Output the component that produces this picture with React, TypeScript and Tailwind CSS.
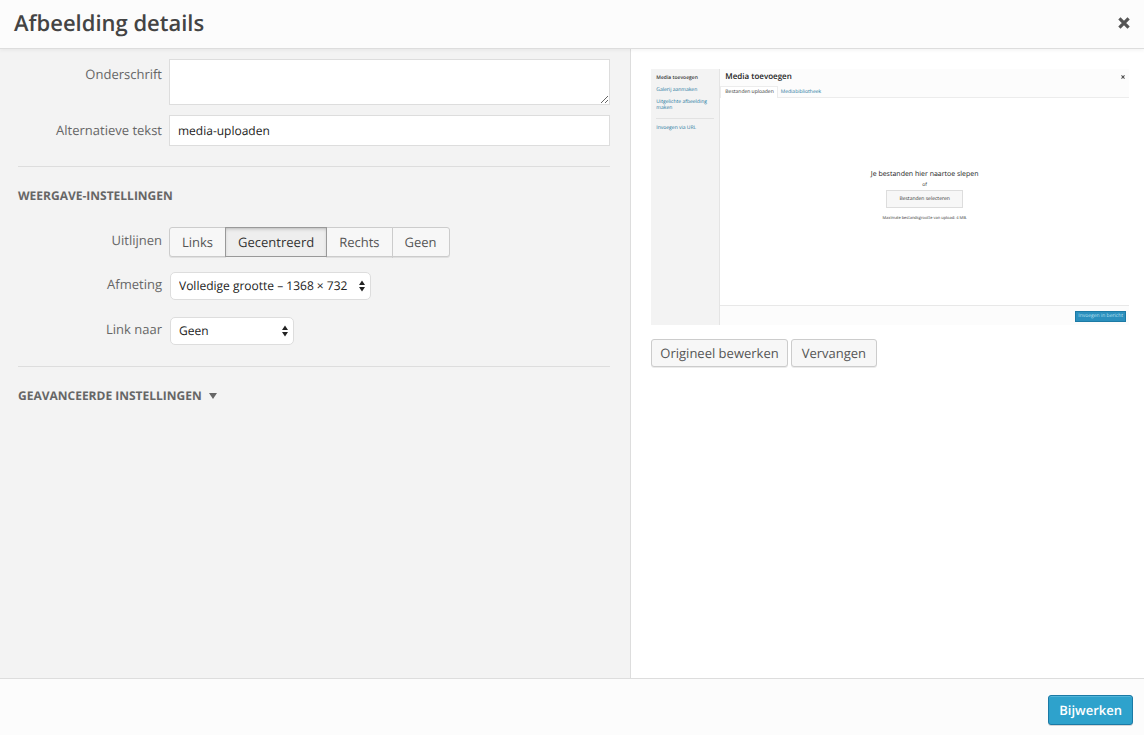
import { useState } from 'react';
import type { ReactNode } from 'react';

const ALIGNMENTS = ['Links', 'Gecentreerd', 'Rechts', 'Geen'];

const grayButton =
  'border border-[#ccc] bg-[#f7f7f7] pt-px text-[#555] text-[13px] shadow-[0_1px_0_rgba(0,0,0,0.08)] hover:bg-[#fafafa] cursor-pointer';

function CloseIcon({ className }: { className?: string }) {
  return (
    <svg viewBox="0 0 12 12" className={className} fill="none" stroke="currentColor" strokeWidth="3.2" aria-hidden="true">
      <path d="M1.4 1.4 10.6 10.6M10.6 1.4 1.4 10.6" />
    </svg>
  );
}

function Setting({ id, label, tall, children }: { id: string; label: string; tall?: boolean; children: ReactNode }) {
  return (
    <div className="flex items-start gap-[7px]">
      <label
        htmlFor={id}
        className={`w-36 shrink-0 text-right text-[13px] leading-5 text-[#666] ${tall ? 'pt-[5px]' : 'pt-[2px]'}`}
      >
        {label}
      </label>
      {children}
    </div>
  );
}

function Select({ id, options, className }: { id: string; options: string[]; className: string }) {
  return (
    <div className={`relative ml-px ${className}`}>
      <select
        id={id}
        className="block h-7 w-full appearance-none rounded-[5px] border border-[#ddd] bg-white pl-2 pr-4 text-xs text-[#222]"
      >
        {options.map((option) => (
          <option key={option}>{option}</option>
        ))}
      </select>
      <svg viewBox="0 0 6 12" className="pointer-events-none absolute right-[6px] top-2 h-3 w-[6px]" fill="#222" aria-hidden="true">
        <path d="M3 0.5 6 5H0zM3 11.5 0 7h6z" />
      </svg>
    </div>
  );
}

// Miniature of the media dialog, shown as the image being edited
function Preview() {
  return (
    <div className="flex aspect-[478/256] text-[5px] leading-[6px] text-[#333]">
      <div className="flex w-[69px] shrink-0 flex-col gap-[6px] border-r border-[#e4e4e4] bg-[#f3f3f3] px-[5px] pt-[6px] text-[#21759b]">
        <span className="font-semibold text-[#333]">Media toevoegen</span>
        <span>Galerij aanmaken</span>
        <span>Uitgelichte afbeelding maken</span>
        <hr className="mt-px border-[#e2e2e2]" />
        <span>Invoegen via URL</span>
      </div>
      <div className="flex min-w-0 flex-1 flex-col">
        <div className="border-b border-[#ececec] bg-[#fcfcfc]">
          <div className="flex items-center justify-between pl-[5px] pr-1 pt-[3px]">
            <span className="text-[8px] font-semibold leading-[10px] text-[#222]">Media toevoegen</span>
            <CloseIcon className="size-1 text-[#555]" />
          </div>
          <div className="mt-1 flex leading-[10px]">
            <span className="-mb-px border-x border-t border-[#ececec] bg-white pl-1 pr-[3px]">Bestanden uploaden</span>
            <span className="border-t border-transparent px-[3px] text-[#21759b]">Mediabibliotheek</span>
          </div>
        </div>
        <div className="flex flex-1 flex-col items-center justify-center bg-white pb-[10px]">
          <span className="text-[7px] leading-[10px] text-[#222]">Je bestanden hier naartoe slepen</span>
          <span className="mt-[2px]">of</span>
          <span className="mt-[2px] border border-[#ddd] bg-[#f7f7f7] px-3 py-[5px]">Bestanden selecteren</span>
          <span className="mt-2 text-[4px]">Maximale bestandsgrootte van upload: 4 MB.</span>
        </div>
        <div className="flex justify-end border-t border-[#e8e8e8] bg-[#fcfcfc] px-[3px] pb-[3px] pt-[5px]">
          <span className="border border-[#1c7aa5] bg-[#2b8fbd] px-[2px] py-px leading-[7px] text-[#b9e0f2]">Invoegen in bericht</span>
        </div>
      </div>
    </div>
  );
}

export default function App() {
  const [align, setAlign] = useState('Gecentreerd');
  const [altText, setAltText] = useState('media-uploaden');

  return (
    <div className="flex min-h-screen flex-col bg-white font-['Open_Sans',sans-serif] text-[13px] text-[#444] **:[text-rendering:geometricPrecision]">
      <header className="relative flex h-[49px] items-center justify-between border-b border-[#ddd] bg-[#fcfcfc] pl-[14px] pr-[14px] pb-[2px] shadow-[0_2px_3px_rgba(0,0,0,0.04)]">
        <h1 className="text-[22px] font-semibold leading-8 text-[#444]">Afbeelding details</h1>
        <button type="button" aria-label="Sluiten" className="cursor-pointer text-[#555]">
          <CloseIcon className="size-3" />
        </button>
      </header>

      <main className="flex flex-1">
        <section className="w-[55.1%] bg-[#f3f3f3] pl-[18px] pr-5 pt-[10px]">
          <div className="flex flex-col gap-[10px]">
            <Setting id="caption" label="Onderschrift" tall>
              <textarea
                id="caption"
                className="block h-[46px] min-w-0 flex-1 resize-y border border-[#ddd] bg-white px-2 py-1 text-[#222]"
              />
            </Setting>
            <Setting id="alt" label="Alternatieve tekst" tall>
              <input
                id="alt"
                type="text"
                value={altText}
                onChange={(e) => setAltText(e.target.value)}
                className="h-[31px] min-w-0 flex-1 border border-[#ddd] bg-white px-2 text-xs text-[#222]"
              />
            </Setting>
          </div>

          <hr className="mt-5 border-[#ddd]" />
          <h2 className="mt-[19px] text-xs font-bold leading-5 text-[#666]">WEERGAVE-INSTELLINGEN</h2>

          <div className="mt-[21px] flex flex-col">
            <div className="flex items-start gap-[7px]">
              <span id="align-label" className="w-36 shrink-0 pt-[3px] text-right leading-5 text-[#666]">
                Uitlijnen
              </span>
              <div role="group" aria-labelledby="align-label" className="flex">
                {ALIGNMENTS.map((name) => (
                  <button
                    key={name}
                    type="button"
                    aria-pressed={align === name}
                    onClick={() => setAlign(name)}
                    className={`-mr-px h-[30px] px-3 first:rounded-l-[3px] last:rounded-r-[3px] ${
                      align === name
                        ? 'relative cursor-pointer border border-[#999] bg-[#eee] pt-px text-[13px] text-[#333] shadow-[inset_0_2px_5px_-3px_rgba(0,0,0,0.5)]'
                        : grayButton
                    }`}
                  >
                    {name}
                  </button>
                ))}
              </div>
            </div>
            <div className="mt-[15px] flex flex-col gap-[17px]">
              <Setting id="size" label="Afmeting">
                <Select id="size" className="w-[201px]" options={['Volledige grootte – 1368 × 732']} />
              </Setting>
              <Setting id="link" label="Link naar">
                <Select id="link" className="w-[124px]" options={['Geen']} />
              </Setting>
            </div>
          </div>

          <hr className="mt-[21px] border-[#ddd]" />
          <h2 className="mt-[19px]">
            <button
              type="button"
              className="flex cursor-pointer items-center gap-[7px] text-xs font-bold leading-5 text-[#666]"
            >
              GEAVANCEERDE INSTELLINGEN
              <svg viewBox="0 0 8 6" className="h-[6px] w-2" fill="currentColor" aria-hidden="true">
                <path d="M0 0h8L4 6z" />
              </svg>
            </button>
          </h2>
        </section>

        <section className="min-w-0 flex-1 border-l border-[#ddd] bg-white pl-5 pr-[15px] pt-5">
          <Preview />
          <div className="mt-[14px] flex gap-[3px]">
            <button type="button" className={`h-7 rounded-[3px] px-2 ${grayButton}`}>
              Origineel bewerken
            </button>
            <button type="button" className={`h-7 rounded-[3px] px-[10px] ${grayButton}`}>
              Vervangen
            </button>
          </div>
        </section>
      </main>

      <footer className="flex h-[57px] items-center justify-end border-t border-[#ddd] bg-[#fcfcfc] pr-[11px] pt-[6px]">
        <button
          type="button"
          className="h-[30px] cursor-pointer rounded-[3px] border border-[#1b7aa6] bg-[#2ea2cc] px-[10px] pt-px text-[13px] font-semibold text-white shadow-[inset_0_1px_0_rgba(120,200,230,0.5),0_1px_0_rgba(0,0,0,0.15)]"
        >
          Bijwerken
        </button>
      </footer>
    </div>
  );
}
